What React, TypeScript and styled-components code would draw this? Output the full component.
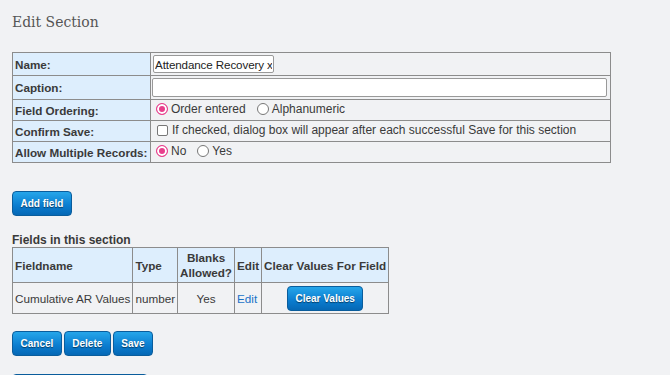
import styled, { createGlobalStyle } from 'styled-components'

const GlobalStyle = createGlobalStyle`
    body {
        margin: 0;
        background: #f1f2f4;
        font-family: "Liberation Sans", Arial, sans-serif;
        color: #333;
    }
`

export default function App() {
    return (
        <Page>
            <GlobalStyle />
            <Title>Edit Section</Title>
            <SettingsTable>
                <tbody>
                    <tr>
                        <LabelCell>Name:</LabelCell>
                        <ValueCell>
                            <NameInput defaultValue='Attendance Recovery x' />
                        </ValueCell>
                    </tr>
                    <tr>
                        <LabelCell>Caption:</LabelCell>
                        <ValueCell>
                            <CaptionInput />
                        </ValueCell>
                    </tr>
                    <tr>
                        <LabelCell $short>Field Ordering:</LabelCell>
                        <ValueCell>
                            <Choice>
                                <Radio checked />Order entered
                            </Choice>
                            <Choice>
                                <Radio />Alphanumeric
                            </Choice>
                        </ValueCell>
                    </tr>
                    <tr>
                        <LabelCell>Confirm Save:</LabelCell>
                        <ValueCell>
                            <Choice>
                                <Box />If checked, dialog box will appear after each successful Save for this section
                            </Choice>
                        </ValueCell>
                    </tr>
                    <tr>
                        <LabelCell>Allow Multiple Records:</LabelCell>
                        <ValueCell>
                            <Choice>
                                <Radio checked />No
                            </Choice>
                            <Choice>
                                <Radio />Yes
                            </Choice>
                        </ValueCell>
                    </tr>
                </tbody>
            </SettingsTable>

            <AddRow>
                <Button>Add field</Button>
            </AddRow>

            <Subheading>Fields in this section</Subheading>
            <FieldsTable>
                <thead>
                    <tr>
                        <HeadCell>Fieldname</HeadCell>
                        <HeadCell>Type</HeadCell>
                        <HeadCell $center>Blanks<br />Allowed?</HeadCell>
                        <HeadCell>Edit</HeadCell>
                        <HeadCell>Clear Values For Field</HeadCell>
                    </tr>
                </thead>
                <tbody>
                    <tr>
                        <BodyCell>Cumulative AR Values</BodyCell>
                        <BodyCell>number</BodyCell>
                        <BodyCell $center>Yes</BodyCell>
                        <BodyCell><EditLink>Edit</EditLink></BodyCell>
                        <BodyCell $center>
                            <Button>Clear Values</Button>
                        </BodyCell>
                    </tr>
                </tbody>
            </FieldsTable>

            <ButtonRow>
                <Button>Cancel</Button>
                <Button>Delete</Button>
                <Button>Save</Button>
            </ButtonRow>
            <BottomRow>
                <Button $long>&nbsp;</Button>
            </BottomRow>
        </Page>
    )
}

const Radio = ({ checked }: { checked?: boolean }) => (
    <RadioCircle $checked={checked} />
)

const Page = styled.div`
    padding: 12px 12px 0 12px;
    height: 375px;
    box-sizing: border-box;
    overflow: hidden;
`

const Title = styled.h1`
    margin: 0 0 19px 0;
    font-family: "DejaVu Serif Condensed", "DejaVu Serif", "Liberation Serif", serif;
    font-stretch: condensed;
    font-weight: normal;
    font-size: 15.5px;
    line-height: 21px;
    color: #555;
`

const SettingsTable = styled.table`
    border-collapse: collapse;
    width: 599px;
    font-size: 12px;
    border: 1px solid #8c8c8c;
    table-layout: fixed;
`

const LabelCell = styled.td<{ $short?: boolean }>`
    width: 133px;
    background: #ddeefd;
    font-weight: bold;
    font-size: 11.7px;
    color: #3a3a3a;
    border: 1px solid #8c8c8c;
    padding: 0 2px;
    height: ${p => (p.$short ? '19px' : '20px')};
    white-space: nowrap;
`

const ValueCell = styled.td`
    border: 1px solid #8c8c8c;
    padding: 2px 3px 2px 2px;
    color: #3a3a3a;
    white-space: nowrap;
`

const NameInput = styled.input`
    width: 121px;
    height: 18px;
    box-sizing: border-box;
    font: 11.6px "Liberation Sans", Arial, sans-serif;
    letter-spacing: -0.1px;
    color: #222;
    border: 1px solid #999;
    border-radius: 2px;
    padding: 0 1px;
    background: #fff;
    display: block;
`

const CaptionInput = styled(NameInput)`
    width: 455px;
    height: 19px;
    margin-left: -1px;
`

const Choice = styled.span`
    display: inline-flex;
    align-items: center;
    margin-right: 8px;
`

const RadioCircle = styled.span<{ $checked?: boolean }>`
    width: 12px;
    height: 12px;
    box-sizing: border-box;
    border-radius: 50%;
    margin: 0 3px 0 3px;
    background: ${p => (p.$checked ? '#e83e8c' : '#fff')};
    border: 1px solid ${p => (p.$checked ? '#e83e8c' : '#777')};
    box-shadow: ${p => (p.$checked ? 'inset 0 0 0 2px #fff' : 'none')};
`

const Box = styled.span`
    width: 11px;
    height: 11px;
    box-sizing: border-box;
    border: 1px solid #777;
    border-radius: 2px;
    background: #fff;
    margin: 0 4px 0 4px;
`

const AddRow = styled.div`
    margin-top: 28px;
`

const Button = styled.button<{ $long?: boolean }>`
    font: bold 10px "Liberation Sans", Arial, sans-serif;
    color: #fff;
    text-shadow: 0 1px 1px rgba(0, 0, 0, 0.5);
    background: linear-gradient(#26a6ea, #0a7ccf 60%, #0568b5);
    border: 1px solid #0a5d9c;
    border-radius: 4px;
    height: 25px;
    padding: 0 7.5px;
    min-width: ${p => (p.$long ? '136px' : 'auto')};
    cursor: pointer;
`

const Subheading = styled.div`
    margin-top: 17px;
    font-weight: bold;
    font-size: 12px;
    color: #3a3a3a;
    line-height: 14px;
`

const FieldsTable = styled.table`
    border-collapse: collapse;
    font-size: 11.7px;
    color: #3a3a3a;
    border: 1px solid #8c8c8c;
`

const HeadCell = styled.th<{ $center?: boolean }>`
    background: #ddeefd;
    border: 1px solid #8c8c8c;
    text-align: ${p => (p.$center ? 'center' : 'left')};
    padding: 2px 2px;
    height: 30px;
    line-height: 15px;
`

const BodyCell = styled.td<{ $center?: boolean }>`
    border: 1px solid #8c8c8c;
    text-align: ${p => (p.$center ? 'center' : 'left')};
    padding: 2px 2px;
    height: 26px;
    white-space: nowrap;
`

const EditLink = styled.a`
    color: #1a73c8;
    text-decoration: none;
`

const ButtonRow = styled.div`
    margin-top: 17px;
    display: flex;
    gap: 2px;
`

const BottomRow = styled.div`
    margin-top: 18px;
`
